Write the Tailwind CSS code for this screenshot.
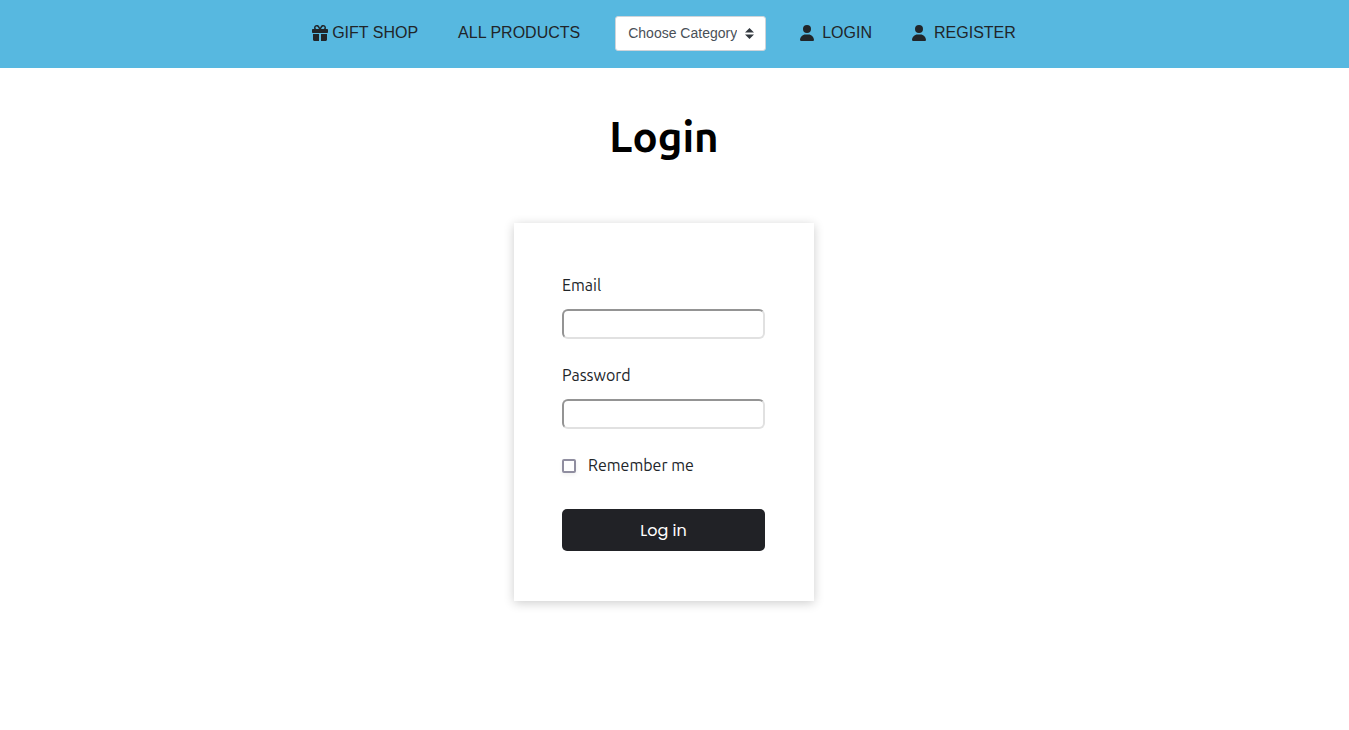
<!DOCTYPE html>
<html lang="en">
<head>
<meta charset="utf-8">
<meta name="viewport" content="width=device-width, initial-scale=1">
<title>Login</title>
<script src="https://cdn.jsdelivr.net/npm/@tailwindcss/browser@4"></script>
</head>
<body class="bg-white text-[#212529] font-['Ubuntu','Noto_Sans',sans-serif]">
<header class="bg-[#57b8e0] pr-[21px] font-['Liberation_Sans',sans-serif]">
  <nav class="flex flex-wrap items-start justify-center pt-4 pb-[17px] text-base leading-[34px]">
    <a href="#" class="mr-10 flex items-center gap-1">
      <svg class="size-4" viewBox="0 0 512 512" fill="currentColor" aria-hidden="true"><path d="M190.500 68.800L225.300 128H152c-22.100 0-40-17.900-40-40s17.900-40 40-40h2.200c14.900 0 28.800 7.900 36.300 20.800zM64 88c0 14.400 3.500 28 9.600 40H32c-17.700 0-32 14.300-32 32v64c0 17.700 14.300 32 32 32h448c17.700 0 32-14.300 32-32v-64c0-17.700-14.300-32-32-32h-41.600c6.100-12 9.600-25.600 9.600-40 0-48.600-39.400-88-88-88h-2.200c-31.900 0-61.500 16.900-77.700 44.400L256 85.500l-24.100-41C215.700 16.900 186.100 0 154.200 0H152C103.400 0 64 39.400 64 88zm336 0c0 22.100-17.900 40-40 40h-73.300l34.800-59.200C329.100 55.900 342.900 48 357.800 48h2.200c22.100 0 40 17.900 40 40zM32 288v176c0 26.500 21.500 48 48 48h144V288H32zm256 224h144c26.500 0 48-21.500 48-48V288H288v224z"/></svg>
      <span>GIFT SHOP</span>
    </a>
    <a href="#" class="mr-[35px]">ALL PRODUCTS</a>
    <div class="relative mr-[34px]">
      <select aria-label="Choose Category" class="block h-[35px] w-[151px] appearance-none rounded-[3px] border border-[#ced4da] bg-white pb-[2px] pl-3 pr-7 text-sm text-[#495057]">
        <option>Choose Category</option>
      </select>
      <svg class="pointer-events-none absolute right-3 top-3 h-[11px] w-[9px]" viewBox="0 0 4 5" preserveAspectRatio="none" fill="#343a40" aria-hidden="true"><path d="M2 0L0 2h4zM2 5L0 3h4z"/></svg>
    </div>
    <a href="#" class="mr-10 flex items-center gap-2">
      <svg class="h-4 w-[14px]" viewBox="0 0 448 512" fill="currentColor" aria-hidden="true"><path d="M224 256a128 128 0 1 0 0-256 128 128 0 1 0 0 256zm-45.700 48C79.800 304 0 383.800 0 482.300 0 498.700 13.300 512 29.700 512h388.600c16.400 0 29.700-13.300 29.700-29.700C448 383.800 368.200 304 269.700 304h-91.400z"/></svg>
      <span>LOGIN</span>
    </a>
    <a href="#" class="flex items-center gap-2">
      <svg class="h-4 w-[14px]" viewBox="0 0 448 512" fill="currentColor" aria-hidden="true"><path d="M224 256a128 128 0 1 0 0-256 128 128 0 1 0 0 256zm-45.700 48C79.800 304 0 383.800 0 482.300 0 498.700 13.300 512 29.700 512h388.600c16.400 0 29.700-13.300 29.700-29.700C448 383.800 368.200 304 269.700 304h-91.400z"/></svg>
      <span>REGISTER</span>
    </a>
  </nav>
</header>
<main class="flex flex-col items-center pt-10 pb-12 pr-[21px]">
  <h1 class="mb-[57px] text-[42px] font-semibold leading-[58px] text-black">Login</h1>
  <form class="w-[300px] bg-white py-[50px] pl-12 pr-[49px] shadow-[0_2px_10px_rgba(0,0,0,0.2)]">
    <label for="email" class="block leading-6">Email</label>
    <input id="email" type="email" class="mt-3 block h-[30px] w-full rounded-[6px] border-2 border-t-[#949494] border-l-[#949494] border-r-[#e1e1e1] border-b-[#e1e1e1] bg-white px-2">
    <label for="password" class="mt-6 block leading-6">Password</label>
    <input id="password" type="password" class="mt-3 block h-[30px] w-full rounded-[6px] border-2 border-t-[#949494] border-l-[#949494] border-r-[#e1e1e1] border-b-[#e1e1e1] bg-white px-2">
    <div class="mt-6 flex items-center">
      <input id="remember" type="checkbox" class="mt-[2px] size-[14px] appearance-none rounded-[2px] border-2 border-[#908ea0] bg-white shadow-[0_2px_4px_rgba(0,0,0,0.06)] checked:bg-[#212226]">
      <label for="remember" class="pl-3 leading-6">Remember me</label>
    </div>
    <button type="submit" class="mt-8 block h-[42px] w-full rounded-[5px] bg-[#212226] pt-[2px] font-['Poppins','Inter',sans-serif] text-base text-white">Log in</button>
  </form>
</main>
</body>
</html>
